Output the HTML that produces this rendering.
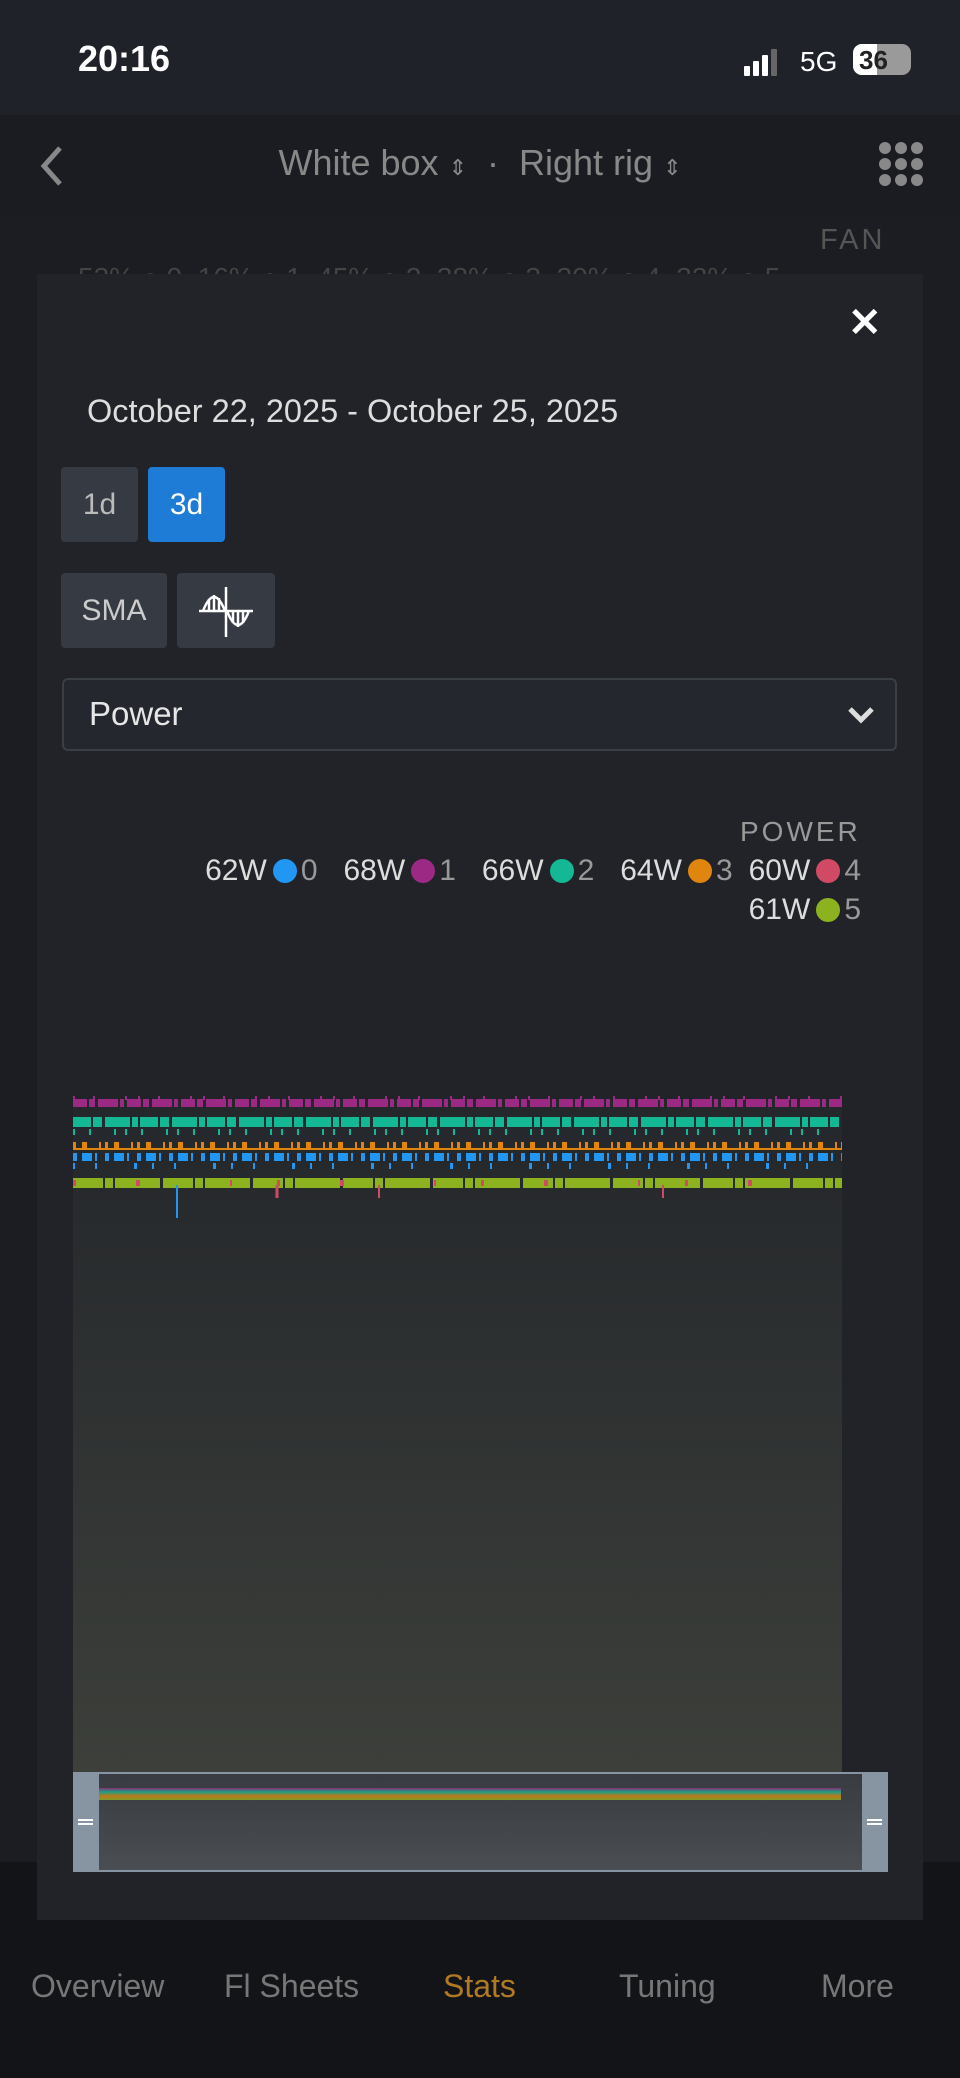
<!DOCTYPE html>
<html><head><meta charset="utf-8"><style>
*{margin:0;padding:0;box-sizing:border-box}
body{width:960px;height:2078px;background:#1b1d22;font-family:"Liberation Sans",sans-serif;position:relative;overflow:hidden;color:#ddd}
.abs{position:absolute}
.lg{display:flex;justify-content:flex-end;font-size:30px;color:#ddd;white-space:nowrap;align-items:center}
.it{display:flex;align-items:center;margin-left:26px}
.d{display:inline-block;width:24px;height:24px;border-radius:50%;margin:0 4px 0 6px}
.n{color:#999}
</style></head><body>
<div class="abs" style="left:0;top:0;width:960px;height:115px;background:#1f2229"></div>
<div class="abs" style="left:78px;top:38px;font-size:36px;font-weight:bold;color:#fff">20:16</div>
<div class="abs" style="left:744px;top:46px;">
 <div class="abs" style="left:0;top:20px;width:6px;height:10px;background:#fff;border-radius:1px"></div>
 <div class="abs" style="left:9px;top:15px;width:6px;height:15px;background:#fff;border-radius:1px"></div>
 <div class="abs" style="left:18px;top:9px;width:6px;height:21px;background:#fff;border-radius:1px"></div>
 <div class="abs" style="left:27px;top:3px;width:6px;height:27px;background:#666;border-radius:1px"></div>
</div>
<div class="abs" style="left:800px;top:46px;font-size:28px;color:#fff">5G</div>
<div class="abs" style="left:853px;top:44px;width:58px;height:31px;border-radius:9px;background:#9a9a9a;overflow:hidden"><div style="width:24px;height:31px;background:#fff"></div><div class="abs" style="left:6px;top:1px;font-size:26px;font-weight:bold;color:#222">36</div></div>
<div class="abs" style="left:0;top:115px;width:960px;height:100px;background:#1a1c21"></div>
<svg class="abs" style="left:36px;top:144px" width="30" height="44"><path d="M24 4 L8 22 L24 40" stroke="#888" stroke-width="5" fill="none"/></svg>
<div class="abs" style="left:0;top:142px;width:960px;text-align:center;font-size:36px;color:#888">White box <span style="font-size:22px">⇕</span> &nbsp;·&nbsp; Right rig <span style="font-size:22px">⇕</span></div>
<svg class="abs" style="left:877px;top:140px" width="48" height="50"><g fill="#888"><circle cx="8" cy="8" r="6"/><circle cx="24" cy="8" r="6"/><circle cx="40" cy="8" r="6"/><circle cx="8" cy="24" r="6"/><circle cx="24" cy="24" r="6"/><circle cx="40" cy="24" r="6"/><circle cx="8" cy="40" r="6"/><circle cx="24" cy="40" r="6"/><circle cx="40" cy="40" r="6"/></g></svg>
<div class="abs" style="left:820px;top:224px;font-size:29px;color:#555;letter-spacing:3px">FAN</div>
<div class="abs" style="left:78px;top:262px;font-size:28px;color:#444">53% ● 0 &nbsp;16% ● 1 &nbsp;45% ● 2 &nbsp;38% ● 3 &nbsp;30% ● 4 &nbsp;32% ● 5</div>
<div class="abs" style="left:0;top:1862px;width:960px;height:216px;background:#121418"></div>
<div class="abs" style="left:0;top:1968px;width:960px;font-size:32px;color:#777">
<span class="abs" style="left:31px">Overview</span><span class="abs" style="left:224px">Fl Sheets</span><span class="abs" style="left:443px;color:#b07a25">Stats</span><span class="abs" style="left:619px">Tuning</span><span class="abs" style="left:821px">More</span></div>
<div class="abs" style="left:37px;top:274px;width:886px;height:1646px;background:#212328"></div>
<div class="abs" style="left:848px;top:300px;font-size:40px;color:#fff;font-weight:bold">✕</div>
<div class="abs" style="left:87px;top:393px;font-size:32.5px;color:#ddd">October 22, 2025 - October 25, 2025</div>
<div class="abs" style="left:61px;top:467px;width:77px;height:75px;background:#363a42;border-radius:4px;color:#bbb;font-size:30px;text-align:center;line-height:75px">1d</div>
<div class="abs" style="left:148px;top:467px;width:77px;height:75px;background:#1e7bd6;border-radius:4px;color:#fff;font-size:30px;text-align:center;line-height:75px">3d</div>
<div class="abs" style="left:61px;top:573px;width:106px;height:75px;background:#363a42;border-radius:4px;color:#ccc;font-size:30px;text-align:center;line-height:75px">SMA</div>
<div class="abs" style="left:177px;top:573px;width:98px;height:75px;background:#363a42;border-radius:4px"></div>
<svg class="abs" style="left:177px;top:573px" width="98" height="75"><g stroke="#fff" stroke-width="2.5" fill="none"><line x1="22" y1="38" x2="76" y2="38"/><line x1="49" y1="14" x2="49" y2="64"/><path d="M26 38 Q37 10 48 38"/><path d="M50 38 Q61 66 72 38"/><line x1="32" y1="26" x2="32" y2="38"/><line x1="37" y1="22" x2="37" y2="38"/><line x1="42" y1="25" x2="42" y2="38"/><line x1="56" y1="38" x2="56" y2="50"/><line x1="61" y1="38" x2="61" y2="54"/><line x1="66" y1="38" x2="66" y2="50"/></g></svg>
<div class="abs" style="left:62px;top:678px;width:835px;height:73px;border:2px solid #3a3e45;border-radius:6px;background:#24272d"></div>
<div class="abs" style="left:89px;top:695px;font-size:33px;color:#e6e6e6">Power</div>
<svg class="abs" style="left:846px;top:703px" width="30" height="24"><path d="M4 6 L15 17 L26 6" stroke="#ddd" stroke-width="5" fill="none"/></svg>
<div class="abs" style="left:740px;top:816px;font-size:28px;color:#999;letter-spacing:3px">POWER</div>
<div class="abs lg" style="right:99px;top:854px">
<span class="it">62W<i class="d" style="background:#2196f3"></i><span class="n">0</span></span>
<span class="it">68W<i class="d" style="background:#9c2a85"></i><span class="n">1</span></span>
<span class="it">66W<i class="d" style="background:#14b894"></i><span class="n">2</span></span>
<span class="it">64W<i class="d" style="background:#e0850e"></i><span class="n">3</span></span>
<span class="it" style="margin-left:16px">60W<i class="d" style="background:#d04a66"></i><span class="n">4</span></span></div>
<div class="abs lg" style="right:99px;top:893px"><span class="it">61W<i class="d" style="background:#8cb31f"></i><span class="n">5</span></span></div>
<div class="abs" style="left:73px;top:1100px;width:769px;height:672px;background:linear-gradient(#24272b,#3c3f3a)"></div>
<svg class="abs" style="left:73px;top:1090px" width="770" height="130">
<g fill="none">
<line x1="0" y1="13" x2="769" y2="13" stroke="#9c2a85" stroke-width="8" stroke-dasharray="14 2 6 3 20 2 4 3"/>
<line x1="0" y1="8" x2="769" y2="8" stroke="#9c2a85" stroke-width="4" stroke-dasharray="2 18 2 30 2 11"/>
<line x1="0" y1="32" x2="769" y2="32" stroke="#14b894" stroke-width="10" stroke-dasharray="18 2 9 3 25 2 6 2"/>
<line x1="0" y1="42" x2="769" y2="42" stroke="#14b894" stroke-width="6" stroke-dasharray="2 14 2 23 2 9"/>
<line x1="0" y1="55" x2="769" y2="55" stroke="#e0850e" stroke-width="6" stroke-dasharray="3 6 5 12 2 4"/>
<line x1="0" y1="59" x2="769" y2="59" stroke="#e0850e" stroke-width="2"/>
<line x1="0" y1="67" x2="769" y2="67" stroke="#2196f3" stroke-width="8" stroke-dasharray="4 5 10 3 2 8"/>
<line x1="0" y1="76" x2="769" y2="76" stroke="#2196f3" stroke-width="6" stroke-dasharray="2 20 2 37 3 15"/>
<line x1="0" y1="93" x2="769" y2="93" stroke="#8cb31f" stroke-width="10" stroke-dasharray="30 2 8 2 45 3"/>
<line x1="0" y1="93" x2="769" y2="93" stroke="#d04a66" stroke-width="6" stroke-dasharray="3 60 4 90 2 45"/>
<line x1="104" y1="95" x2="104" y2="128" stroke="#2196f3" stroke-width="2"/>
<line x1="204" y1="95" x2="204" y2="108" stroke="#d04a66" stroke-width="3"/>
<line x1="306" y1="95" x2="306" y2="108" stroke="#d04a66" stroke-width="2"/>
<line x1="590" y1="95" x2="590" y2="108" stroke="#d04a66" stroke-width="2"/>
</g></svg>
<div class="abs" style="left:73px;top:1772px;width:814px;height:100px;background:linear-gradient(#383c42,#4a4e52);border:2px solid #8795a2"></div>
<div class="abs" style="left:73px;top:1772px;width:26px;height:100px;background:#8795a2"></div>
<div class="abs" style="left:862px;top:1772px;width:26px;height:100px;background:#8795a2"></div>
<div class="abs" style="left:78px;top:1819px;width:15px;height:6px;border-top:2px solid #fff;border-bottom:2px solid #fff"></div>
<div class="abs" style="left:867px;top:1819px;width:15px;height:6px;border-top:2px solid #fff;border-bottom:2px solid #fff"></div>
<div class="abs" style="left:99px;top:1788px;width:742px;height:12px;background:linear-gradient(#9c2a85,#14b894,#e0850e,#8cb31f);opacity:.8"></div>
</body></html>
